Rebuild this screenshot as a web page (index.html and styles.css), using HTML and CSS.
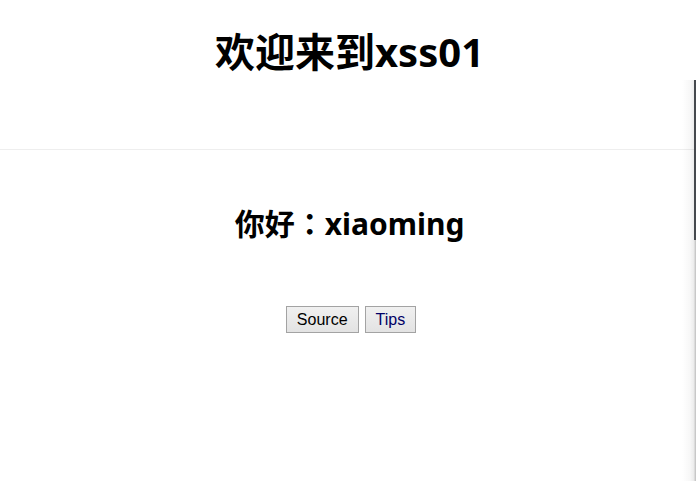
FILE: index.html
```html
<!DOCTYPE html>
<html lang="zh">
<head>
<meta charset="utf-8">
<title>xss01</title>
<link rel="stylesheet" href="styles.css">
</head>
<body>
<header class="top">
  <h1 class="title">欢迎来到xss01</h1>
</header>
<main class="content">
  <h2 class="greeting">你好<span class="colon" lang="ja">：</span>xiaoming</h2>
  <div class="actions">
    <button class="btn" type="button">Source</button>
    <button class="btn btn-tips" type="button">Tips</button>
  </div>
</main>
<div class="edge-panel"></div>
</body>
</html>
```

FILE: styles.css
```css
html, body {
  margin: 0;
  padding: 0;
  background: #fff;
  overflow: hidden;
}
body {
  font-family: "Microsoft YaHei", "Noto Sans", "Noto Sans CJK SC", sans-serif;
  color: #000;
  height: 481px;
  position: relative;
}
.top {
  border-bottom: 1px solid #eeeeee;
  height: 150px;
  box-sizing: border-box;
  display: flex;
  justify-content: center;
}
.title {
  margin: 0;
  padding-top: 24px;
  padding-left: 3px;
  font-size: 40px;
  font-weight: 700;
  line-height: 56px;
}
.content {
  display: flex;
  flex-direction: column;
  align-items: center;
}
.greeting {
  margin: 0;
  padding-top: 53px;
  padding-left: 3px;
  height: 42px;
  font-family: "Noto Sans", "Noto Sans CJK SC", sans-serif;
  font-size: 30px;
  font-weight: 700;
  line-height: 42px;
}
.colon {
  font-family: "Noto Sans CJK JP", sans-serif;
  line-height: 1;
}
.actions {
  display: flex;
  gap: 6px;
  margin-top: 61px;
  padding-left: 6px;
}
.btn {
  font-family: "Liberation Sans", Arial, sans-serif;
  font-size: 16px;
  height: 27px;
  padding: 0 10px;
  background: linear-gradient(#f0f0f0, #e3e3e3);
  border: 1px solid #a3a3a3;
  border-radius: 0;
  color: #000;
}
.btn-tips {
  color: #000066;
}
.edge-panel {
  position: absolute;
  right: 0;
  top: 80px;
  bottom: 0;
  width: 14px;
  background: linear-gradient(90deg, rgba(0,0,0,0) 0, rgba(0,0,0,0.03) 8px, rgba(0,0,0,0.08) 12px, #dcdcdc 12px, #dcdcdc 13px, #c8c8c8 13px);
}
.edge-panel::before {
  content: "";
  position: absolute;
  right: 0;
  top: 0;
  width: 2px;
  height: 160px;
  background: #45484d;
}
```
